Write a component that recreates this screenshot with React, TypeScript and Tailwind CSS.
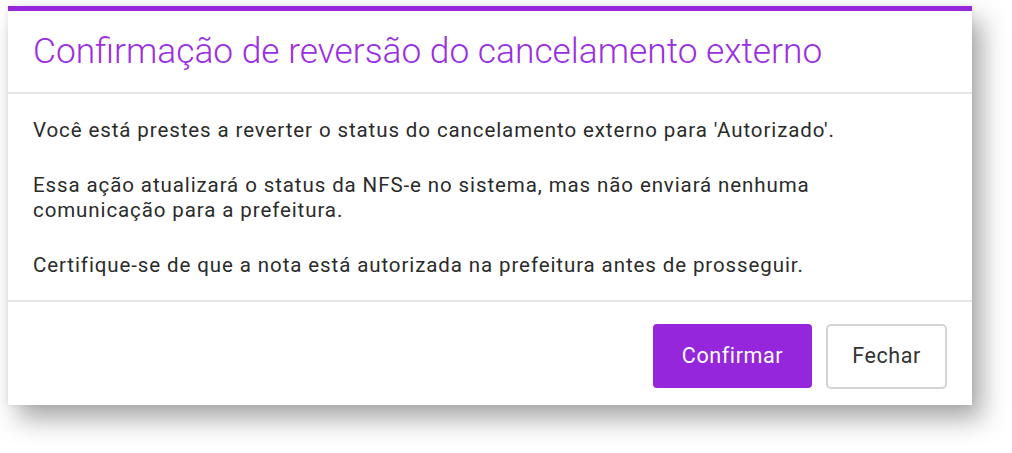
import React from 'react';

const ConfirmDialog: React.FC = () => {
  return (
    <div className="w-[964px] ml-2 mt-[6px] bg-white border-t-[5px] border-[#9526dc] shadow-[10px_14px_24px_rgba(0,0,0,0.34),0_0_6px_rgba(0,0,0,0.08)]">
      <header className="h-[83px] flex items-center px-[25px] border-b-2 border-[#e6e6e6]">
        <h2 className="text-[35.3px] font-light text-[#9a2ee0] leading-none">
          Confirmação de reversão do cancelamento externo
        </h2>
      </header>

      <div className="px-[25px] pt-[24px] pb-[22px] text-[20.5px] tracking-[0.9px] leading-[25px] text-[#2b2b2b] flex flex-col gap-[30px] border-b-2 border-[#e6e6e6]">
        <p>Você está prestes a reverter o status do cancelamento externo para 'Autorizado'.</p>
        <p>
          Essa ação atualizará o status da NFS-e no sistema, mas não enviará nenhuma
          <br />
          comunicação para a prefeitura.
        </p>
        <p>Certifique-se de que a nota está autorizada na prefeitura antes de prosseguir.</p>
      </div>

      <footer className="h-[103px] flex items-start justify-end gap-[14px] px-[25px] pt-[22px]">
        <button className="w-[159px] h-[64px] rounded-[4px] bg-[#9526dc] text-white text-[21.5px] tracking-[0.6px]">
          Confirmar
        </button>
        <button className="w-[121px] h-[65px] rounded-[5px] bg-white border-2 border-[#d4d4d4] text-[#333] text-[21.5px] tracking-[0.6px]">
          Fechar
        </button>
      </footer>
    </div>
  );
};

export default function App() {
  return (
    <div className="w-[1012px] h-[453px] bg-white overflow-hidden" style={{ fontFamily: 'Roboto, "Noto Sans", sans-serif' }}>
      <ConfirmDialog />
    </div>
  );
}
